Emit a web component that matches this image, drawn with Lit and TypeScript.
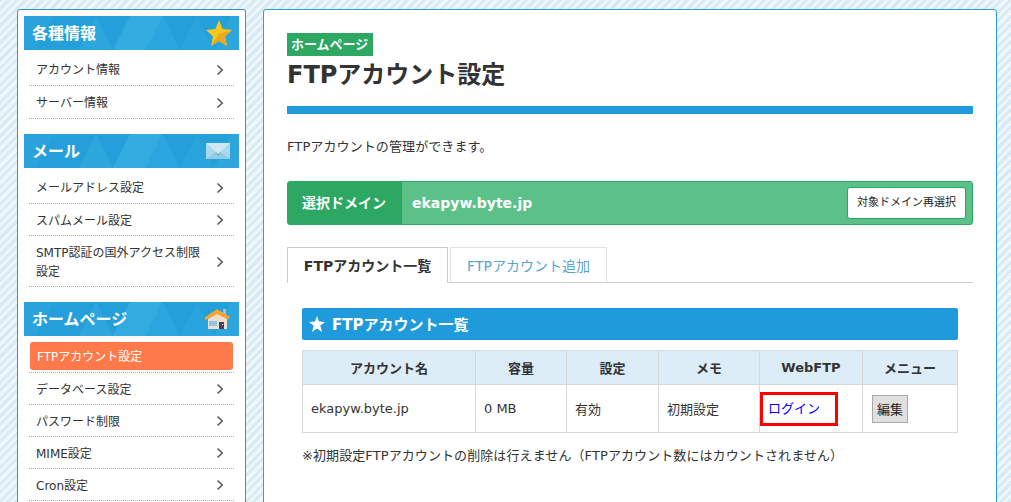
import { LitElement, html, css, svg } from "lit";
import { customElement } from "lit/decorators.js";

const chevron = html`<svg class="chev" width="8" height="12" viewBox="0 0 8 12"><path d="M1.5 1.5 L6.3 6 L1.5 10.5" fill="none" stroke="#555" stroke-width="1.5"/></svg>`;

const texture = html`<svg class="tex" width="215" height="34" viewBox="0 0 215 34">
  <polygon points="0,0 30,0 12,34 0,34" fill="#2aa3dc"/>
  <polygon points="55,34 72,0 89,34" fill="#2ca6dd"/>
  <polygon points="89,34 106,0 139,0 122,34" fill="#32abe0"/>
  <polygon points="139,0 122,34 156,34" fill="#2ba5dd"/>
  <polygon points="156,34 173,0 190,34" fill="#2aa4dc"/>
  <polygon points="190,34 207,0 215,0 215,34" fill="#2ca6dd"/>
</svg>`;

const star = svg`<svg class="ic star" width="26" height="27" viewBox="0 0 26 27">
  <polygon points="13,0 16.6,9 26,10 19,16.5 21,26 13,21 5,26 7,16.5 0,10 9.4,9" fill="#f5c71d"/>
  <polygon points="13,14 26,10 19,16.5 21,26 13,21 5,26" fill="#eda921"/>
</svg>`;

const mail = svg`<svg class="ic mail" width="24" height="16" viewBox="0 0 24 16">
  <rect width="24" height="16" fill="#a9d9ee"/>
  <polygon points="0,16 12,7 24,16" fill="#8ecbe6"/>
  <polygon points="0,0 24,0 12,11" fill="#cfe8f2"/>
  <polygon points="9,8.5 12,11 15,8.5 12,13" fill="#6fb69c"/>
</svg>`;

const home = svg`<svg class="ic home" width="26" height="21" viewBox="0 0 26 21">
  <rect x="19" y="0" width="3" height="7" fill="#a9c4c0"/>
  <polygon points="4,10 13,4 23,10 23,20 4,20" fill="#eee0cf"/>
  <polygon points="0,9 13,0 26,8 24,10.5 13,5 2,11" fill="#f5a431"/>
  <rect x="5" y="12" width="8" height="5" fill="#8ec6e4"/>
  <rect x="15" y="13" width="5" height="7" fill="#4a3f63"/>
  <rect x="18" y="15" width="1" height="1" fill="#fff"/>
</svg>`;

interface Item { t: string; h: number; active?: boolean; }
interface Group { title: string; icon: unknown; items: Item[]; }

const groups: Group[] = [
  { title: "各種情報", icon: star, items: [{ t: "アカウント情報", h: 33 }, { t: "サーバー情報", h: 33 }] },
  { title: "メール", icon: mail, items: [{ t: "メールアドレス設定", h: 33 }, { t: "スパムメール設定", h: 32 }, { t: "SMTP認証の国外アクセス制限設定", h: 51 }] },
  { title: "ホームページ", icon: home, items: [{ t: "FTPアカウント設定", h: 34, active: true }, { t: "データベース設定", h: 32 }, { t: "パスワード制限", h: 32 }, { t: "MIME設定", h: 32 }, { t: "Cron設定", h: 32 }] },
];

@customElement("app-root")
export class AppRoot extends LitElement {
  static styles = css`
    :host {
      display: block; width: 1011px; height: 502px; overflow: hidden;
      font-family: "DejaVu Sans", "Noto Sans CJK JP", sans-serif;
      color: #333; font-size: 13px;
      background: repeating-linear-gradient(-45deg, #d8eaf4 0 3px, #f0f7fb 3px 6px);
    }
    .page { display: flex; align-items: flex-start; gap: 17px; padding: 9px 0 0 17px; }
    .side {
      width: 229px; box-sizing: border-box; height: 520px; flex: none;
      background: #fff; border: 1px solid #2f95cc; border-radius: 3px; padding: 6px;
    }
    .group { margin-bottom: 15px; }
    .gh {
      position: relative; height: 34px; background: #249fd9; color: #fff;
      font-size: 16px; font-weight: 700; line-height: 36px; padding-left: 8px; overflow: hidden;
    }
    .gh span { position: relative; }
    .tex { position: absolute; left: 0; top: 0; }
    .ic { position: absolute; }
    .star { right: 7px; top: 4px; }
    .mail { right: 9px; top: 9px; }
    .home { right: 9px; top: 7px; }
    .items { list-style: none; margin: 0; padding: 3px 5px 0; }
    .items li {
      display: flex; align-items: center; justify-content: space-between; box-sizing: border-box;
      padding: 3px 10px 0 7px; border-bottom: 1px dotted #aaa;
      font-size: 12px; line-height: 19px; color: #333;
    }
    .items li .lab { width: 170px; }
    .chev { margin-top: -2px; }
    .items li.on { display: block; padding: 3px 1px 0; }
    .items li.on div {
      background: #ff7a4b; color: #fff; border-radius: 3px;
      height: 28px; line-height: 30px; padding-left: 7px;
    }
    .main {
      width: 734px; height: 520px; box-sizing: border-box; flex: none;
      background: #fff; border: 1px solid #2a9fdc; border-radius: 3px; padding: 23px 23px 0;
    }
    .badge {
      display: block; background: #2ca862; color: #fff; height: 23px; line-height: 23px;
      font-size: 13px; font-weight: 700; padding: 0 4px; width: 78px;
    }
    h1 { margin: 4px 0 0; font-size: 24px; line-height: 30px; font-weight: 700; color: #333; }
    .rule { height: 8px; background: #1f9bdb; margin-top: 16px; }
    .lead { margin: 23px 0 0; line-height: 20px; font-size: 13px; letter-spacing: .1px; }
    .dom {
      display: flex; align-items: stretch; height: 44px; box-sizing: border-box; margin-top: 24px;
      border: 1px solid #2ca862; border-radius: 3px; background: #5bc189; color: #fff;
    }
    .dl { width: 112px; padding-right: 2px; background: #2ca862; font-weight: 700; text-align: center; line-height: 42px; font-size: 14px; }
    .dv { flex: 1; font-size: 14px; font-weight: 700; line-height: 42px; padding-left: 10px; }
    .rebtn {
      align-self: center; background: #fff; color: #222; border: 1px solid #2ca862; border-radius: 3px;
      font-size: 11px; height: 32px; line-height: 30px; box-sizing: border-box; margin-right: 6px; width: 119px; text-align: center;
    }
    .tabs { display: flex; gap: 2px; margin-top: 22px; height: 35px; border-bottom: 1px solid #ccc; font-size: 14px; }
    .tab { box-sizing: border-box; text-align: center; line-height: 36px; color: #5aa5d0; }
    .tab.a { width: 161px; height: 36px; border: 1px solid #ccc; border-bottom: 0; background: #fff; color: #333; font-weight: 700; }
    .tab.b { width: 157px; height: 35px; border: 1px solid #e2e2e2; border-bottom: 0; }
    .sec {
      display: flex; align-items: center; gap: 7px; margin: 25px 15px 0; height: 32px; box-sizing: border-box; background: #1f9bdb; color: #fff;
      border-radius: 2px; padding: 0 0 1px 7px; font-weight: 700; font-size: 15px;
    }
    table { border-collapse: collapse; margin: 10px 15px 0; width: 655px; table-layout: fixed; }
    th:nth-child(1) { width: 173px; }
    th:nth-child(2) { width: 91px; }
    th:nth-child(3) { width: 92px; }
    th:nth-child(4) { width: 101px; }
    th:nth-child(5) { width: 103px; }
    th:nth-child(6) { width: 95px; }
    th, td { box-sizing: border-box; border: 1px solid #d8d8d8; padding: 0 8px; font-size: 13px; }
    th { background: #dcedf8; height: 34px; font-weight: 700; text-align: center; }
    td { height: 48px; }
    td.box { padding: 0; }
    .login {
      display: block; box-sizing: border-box; width: 78px; height: 34px;
      border: 3px solid #f00; color: #00f; text-decoration: none; padding-left: 5px; line-height: 28px;
    }
    td.mn { padding: 0 0 0 9px; }
    .edit {
      display: flex; align-items: center; justify-content: center; box-sizing: border-box;
      background: #e0e0e0; border: 1px solid #aaa; color: #222; height: 28px; width: 36px;
    }
    .note { margin: 13px 15px 0; line-height: 20px; font-size: 13px; letter-spacing: .09px; }
  `;

  render() {
    return html`<div class="page">
      <aside class="side">
        ${groups.map((g) => html`<section class="group">
          <div class="gh">${texture}<span>${g.title}</span>${g.icon}</div>
          <ul class="items">
            ${g.items.map((i) => i.active
              ? html`<li class="on" style="height:${i.h}px"><div>${i.t}</div></li>`
              : html`<li style="height:${i.h}px"><span class="lab">${i.t}</span>${chevron}</li>`)}
          </ul>
        </section>`)}
      </aside>
      <main class="main">
        <div class="badge">ホームページ</div>
        <h1>FTPアカウント設定</h1>
        <div class="rule"></div>
        <p class="lead">FTPアカウントの管理ができます。</p>
        <div class="dom">
          <div class="dl">選択ドメイン</div>
          <div class="dv">ekapyw.byte.jp</div>
          <div class="rebtn">対象ドメイン再選択</div>
        </div>
        <div class="tabs">
          <div class="tab a">FTPアカウント一覧</div>
          <div class="tab b">FTPアカウント追加</div>
        </div>
        <div class="sec"><svg width="16" height="16" viewBox="0 0 16 16"><polygon points="8,0 10,5.6 16,6 11.3,9.8 13,16 8,12.5 3,16 4.7,9.8 0,6 6,5.6" fill="#fff"/></svg>FTPアカウント一覧</div>
        <table>
          <tr><th>アカウント名</th><th>容量</th><th>設定</th><th>メモ</th><th>WebFTP</th><th>メニュー</th></tr>
          <tr>
            <td>ekapyw.byte.jp</td><td>0 MB</td><td>有効</td><td>初期設定</td>
            <td class="box"><a class="login" href="#">ログイン</a></td>
            <td class="mn"><span class="edit">編集</span></td>
          </tr>
        </table>
        <p class="note">※初期設定FTPアカウントの削除は行えません（FTPアカウント数にはカウントされません）</p>
      </main>
    </div>`;
  }
}
